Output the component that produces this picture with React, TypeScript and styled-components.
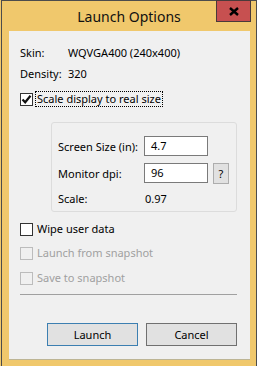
import React from "react";
import styled, { createGlobalStyle } from "styled-components";

const Global = createGlobalStyle`
  html, body { margin: 0; padding: 0; background: #F0C86C; }
  body { font-family: "Noto Sans", "Liberation Sans", sans-serif; font-size: 11px; color: #000; }
  * { box-sizing: border-box; }
`;

const Window = styled.div`
  width: 256px;
  height: 366px;
  margin-left: 1px;
  background: #f0c86c;
  border: 1px solid #4c4c4c;
  border-bottom: none;
  display: flex;
  flex-direction: column;
`;

const TitleBar = styled.div`
  height: 30px;
  display: grid;
  grid-template-columns: 1fr auto 1fr;
  align-items: start;
`;

const Title = styled.div`
  grid-column: 2;
  font-size: 14px;
  line-height: 15px;
  margin-top: 8px;
  color: #111;
`;

const CloseButton = styled.div`
  grid-column: 3;
  justify-self: end;
  width: 35px;
  height: 22px;
  margin-top: -1px;
  margin-right: 5px;
  background: #c75050;
  border: 1px solid #4a3a3a;
  display: flex;
  align-items: center;
  justify-content: center;
`;

const Client = styled.div`
  margin: 0 6px 0 7px;
  height: 329px;
  background: #f0f0f0;
  border-bottom: 1px solid #bdb595;
  display: flex;
  flex-direction: column;
  padding: 14px 13px 0 11px;
  white-space: nowrap;
`;

const InfoRow = styled.div<{ $gap?: number }>`
  display: grid;
  grid-template-columns: 48px auto;
  height: 16px;
  line-height: 16px;
  margin-top: ${(p) => p.$gap ?? 0}px;
`;

const CheckRow = styled.div<{ $gap?: number; $disabled?: boolean }>`
  display: flex;
  align-items: center;
  height: 16px;
  margin-top: ${(p) => p.$gap ?? 0}px;
  color: ${(p) => (p.$disabled ? "#a0a0a0" : "#000")};
`;

const Box = styled.div<{ $disabled?: boolean }>`
  width: 13px;
  height: 13px;
  border: 1px solid ${(p) => (p.$disabled ? "#bcbcbc" : "#333")};
  background: ${(p) => (p.$disabled ? "#f0f0f0" : "#fff")};
  display: flex;
  align-items: center;
  justify-content: center;
  margin-right: 2px;
`;

const Label = styled.span<{ $focus?: boolean }>`
  line-height: 14px;
  padding: 0 1px;
  border: 1px ${(p) => (p.$focus ? "dotted #000" : "solid transparent")};
`;

const Group = styled.div`
  margin-top: 15px;
  margin-left: 31px;
  width: 186px;
  height: 90px;
  border: 1px solid #dcdcdc;
  border-radius: 3px;
  padding: 13px 0 0 6px;
  display: grid;
  grid-template-columns: 81px 64px 16px;
  column-gap: 5px;
  grid-template-rows: 20px 20px 16px;
  row-gap: 7px;
  align-items: center;
`;

const Input = styled.div`
  height: 20px;
  border: 1px solid #7a7a7a;
  background: #fff;
  padding-left: 6px;
  line-height: 18px;
`;

const HelpButton = styled.div`
  height: 21px;
  background: #e1e1e1;
  border: 1px solid #adadad;
  display: flex;
  align-items: center;
  justify-content: center;
  margin-top: 1px;
`;

const Value = styled.span`
  padding-left: 1px;
`;

const Separator = styled.div`
  margin-top: 8px;
  height: 1px;
  background: #a0a0a0;
`;

const Buttons = styled.div`
  margin-top: 28px;
  display: flex;
  justify-content: flex-end;
  gap: 8px;
`;

const Button = styled.div<{ $default?: boolean }>`
  width: 91px;
  height: 23px;
  background: #e1e1e1;
  border: 1px solid ${(p) => (p.$default ? "#3c7fb1" : "#707070")};
  display: flex;
  align-items: center;
  justify-content: center;
`;

const Check = () => (
  <svg width="11" height="11" viewBox="0 0 11 11">
    <path d="M1.5 5.5 L4.2 8.3 L9.5 1.8" stroke="#111" strokeWidth="2.2" fill="none" />
  </svg>
);

const CloseGlyph = () => (
  <svg width="10" height="9" viewBox="0 0 10 9">
    <path d="M1 1 L9 8 M9 1 L1 8" stroke="#000" strokeWidth="2.4" />
  </svg>
);

export default function App() {
  return (
    <>
      <Global />
      <Window>
        <TitleBar>
          <Title>Launch Options</Title>
          <CloseButton>
            <CloseGlyph />
          </CloseButton>
        </TitleBar>
        <Client>
          <InfoRow>
            <span>Skin:</span>
            <span>WQVGA400 (240x400)</span>
          </InfoRow>
          <InfoRow $gap={5}>
            <span>Density:</span>
            <span>320</span>
          </InfoRow>
          <CheckRow $gap={9}>
            <Box>
              <Check />
            </Box>
            <Label $focus>Scale display to real size</Label>
          </CheckRow>
          <Group>
            <span>Screen Size (in):</span>
            <Input>4.7</Input>
            <span />
            <span>Monitor dpi:</span>
            <Input>96</Input>
            <HelpButton>?</HelpButton>
            <span>Scale:</span>
            <Value>0.97</Value>
            <span />
          </Group>
          <CheckRow $gap={9}>
            <Box />
            <Label>Wipe user data</Label>
          </CheckRow>
          <CheckRow $gap={8} $disabled>
            <Box $disabled />
            <Label>Launch from snapshot</Label>
          </CheckRow>
          <CheckRow $gap={9} $disabled>
            <Box $disabled />
            <Label>Save to snapshot</Label>
          </CheckRow>
          <Separator />
          <Buttons>
            <Button $default>Launch</Button>
            <Button>Cancel</Button>
          </Buttons>
        </Client>
      </Window>
    </>
  );
}
